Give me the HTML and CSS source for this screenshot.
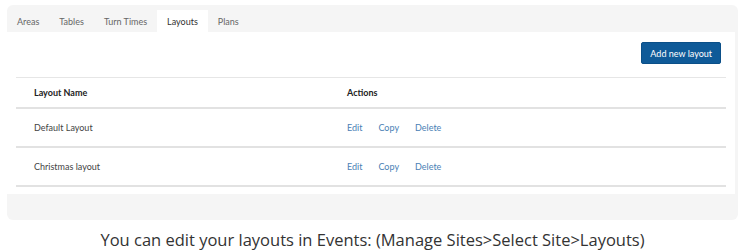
FILE: index.html
```html
<!DOCTYPE html>
<html lang="en">
<head>
    <meta charset="UTF-8">
    <title>Layouts</title>
    <link rel="stylesheet" href="styles.css">
</head>
<body>

<section class="settings">
  <div class="panel">
    <nav class="tabs">
      <a class="tab">Areas</a>
      <a class="tab">Tables</a>
      <a class="tab">Turn Times</a>
      <a class="tab active">Layouts</a>
      <a class="tab">Plans</a>
    </nav>
    <div class="panel-body">
      <div class="toolbar">
        <button type="button" class="add-btn">Add new layout</button>
      </div>
      <table class="layouts">
        <thead>
          <tr>
            <th class="col-name">Layout Name</th>
            <th>Actions</th>
          </tr>
        </thead>
        <tbody>
          <tr>
            <td class="col-name">Default Layout</td>
            <td><div class="actions"><a>Edit</a><a>Copy</a><a>Delete</a></div></td>
          </tr>
          <tr>
            <td class="col-name">Christmas layout</td>
            <td><div class="actions"><a>Edit</a><a>Copy</a><a>Delete</a></div></td>
          </tr>
        </tbody>
      </table>
    </div>
  </div>
  <p class="caption">You can edit your layouts in Events: (Manage Sites&gt;Select Site&gt;Layouts)</p>
</section>

</body>
</html>
```

FILE: styles.css
```css
body{
  margin: 0;
  font-family: 'Lato', sans-serif;
  background-color: #fff;
}

.settings{
  padding: 5px 4px 0 7px;
}
.panel{
  background-color: #f5f5f5;
  border-radius: 6px;
  padding-bottom: 26px;
}

.tabs{
  display: flex;
  height: 27px;
  align-items: flex-end;
}
.tab{
  display: flex;
  align-items: center;
  height: 22px;
  padding: 0 10px;
  font-size: 9px;
  color: #666;
  cursor: pointer;
}
.tab.active{
  background-color: #fff;
  color: #333;
}

.panel-body{
  background-color: #fff;
  margin-right: 3px;
  height: 162px;
  padding: 10px 9px 0 9px;
  box-sizing: border-box;
}
.toolbar{
  display: flex;
  justify-content: flex-end;
  padding-right: 5px;
}
.add-btn{
  font-family: 'Lato', sans-serif;
  font-size: 9px;
  color: #fff;
  background-color: #0f5a98;
  border: 1px solid #0b4f88;
  border-radius: 2px;
  height: 22px;
  padding: 0 8px;
  cursor: pointer;
}

.layouts{
  width: 100%;
  margin-top: 13px;
  border-collapse: collapse;
  font-size: 9px;
}
.layouts th,
.layouts td{
  text-align: left;
  padding: 0 18px;
}
.layouts .col-name{
  width: 277px;
}
.layouts thead tr{
  height: 30px;
  border-top: 1px solid #e6e6e6;
  border-bottom: 2px solid #e2e2e2;
}
.layouts th{
  font-weight: 700;
  color: #222;
}
.layouts tbody tr{
  height: 39px;
  border-bottom: 2px solid #e2e2e2;
}
.layouts td{
  color: #444;
}
.actions{
  display: flex;
  gap: 16px;
}
.actions a{
  color: #4a7fb5;
  cursor: pointer;
}

.caption{
  margin: 8px 0 0 0;
  text-align: center;
  font-family: 'Open Sans', sans-serif;
  font-size: 16.5px;
  color: #333;
}
```
